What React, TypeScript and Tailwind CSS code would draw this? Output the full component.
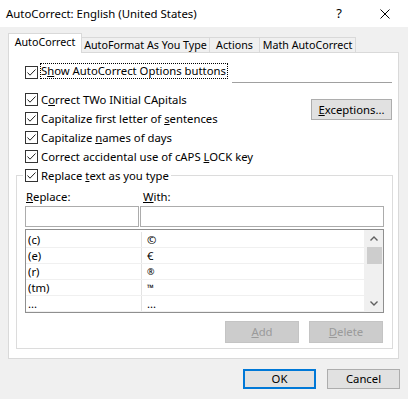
import React from 'react';

function Check({ className = '' }: { className?: string }) {
  return (
    <span className={`inline-flex w-[13px] h-[13px] shrink-0 border border-[#333333] bg-white ${className}`}>
      <svg width="11" height="11" viewBox="0 0 11 11">
        <polyline points="1.5,5.5 4,8.2 9.5,2.5" fill="none" stroke="#222" strokeWidth="1" />
      </svg>
    </span>
  );
}

function Chevron({ up }: { up?: boolean }) {
  return (
    <svg width="8" height="5" viewBox="0 0 8 5">
      <polyline
        points={up ? '0.5,4.5 4,1 7.5,4.5' : '0.5,0.5 4,4 7.5,0.5'}
        fill="none"
        stroke="#606060"
        strokeWidth="1.4"
      />
    </svg>
  );
}

const rows = [
  ['(c)', '©'],
  ['(e)', '€'],
  ['(r)', '®'],
  ['(tm)', '™'],
  ['...', '...'],
];

export default function App() {
  return (
    <div className="w-[408px] h-[399px] bg-[#f0f0f0] flex flex-col text-[11.3px] leading-none text-black font-['Noto_Sans',sans-serif] overflow-hidden whitespace-nowrap">
      {/* Title bar */}
      <div className="h-[27px] bg-white flex items-center pl-[6px] shrink-0 text-[11.4px]">
        <span className="flex-1">AutoCorrect: English (United States)</span>
        <span className="mr-[38px] text-[13px]">?</span>
        <svg width="10" height="10" viewBox="0 0 10 10" className="mr-[18px]">
          <path d="M0.5 0.5 L9.5 9.5 M9.5 0.5 L0.5 9.5" stroke="#000" strokeWidth="1" />
        </svg>
      </div>

      {/* Tabs */}
      <div className="ml-[8px] mt-[6px] w-[391px] h-[20px] flex items-end shrink-0 text-[10.7px]">
        <div className="w-[74px] h-[20px] bg-white border-l border-t border-r border-[#d9d9d9] flex items-center justify-center pb-[2px]">
          AutoCorrect
        </div>
        <div className="w-[128px] h-[16px] border-t border-r border-b border-[#d9d9d9] flex items-center justify-center">
          AutoFormat As You Type
        </div>
        <div className="w-[50px] h-[16px] border-t border-r border-b border-[#d9d9d9] flex items-center justify-center">
          Actions
        </div>
        <div className="w-[96px] h-[16px] border-t border-r border-b border-[#d9d9d9] flex items-center justify-center">
          Math AutoCorrect
        </div>
        <div className="flex-1 h-px bg-[#d9d9d9]" />
      </div>

      {/* Tab page */}
      <div className="ml-[8px] w-[391px] h-[306px] bg-white border-l border-r border-b border-[#d9d9d9] shrink-0 flex flex-col">
        <div className="mt-[10px] pl-[16px] h-[16px] flex items-end">
          <Check />
          <span className="ml-[2px] h-[16px] flex items-center border border-dotted border-black pr-[1px]">
            S<u>h</u>ow AutoCorrect Options buttons
          </span>
        </div>
        <div className="mt-[3px] ml-[223px] w-[160px] h-px bg-[#a0a0a0]" />

        <div className="mt-[7px] flex">
          <div className="pl-[16px] flex flex-col">
            {[
              <>C<u>o</u>rrect TWo INitial CApitals</>,
              <>Capitalize first letter of <u>s</u>entences</>,
              <>Capitalize <u>n</u>ames of days</>,
              <>Correct accidental use of cAPS <u>L</u>OCK key</>,
            ].map((label, i) => (
              <div key={i} className="h-[19px] flex items-center">
                <Check />
                <span className="ml-[3px]">{label}</span>
              </div>
            ))}
          </div>
          <button className="ml-auto mr-[6px] mt-[9px] w-[81px] h-[21px] bg-[#e1e1e1] border border-[#adadad]">
            <u>E</u>xceptions...
          </button>
        </div>

        <fieldset className="ml-[7px] w-[377px] border border-[#dcdcdc] pb-[5px]">
          <legend className="ml-[6px] px-[2px]">
            <div className="h-[19px] flex items-center">
              <Check />
              <span className="ml-[3px]">Replace <u>t</u>ext as you type</span>
            </div>
          </legend>
          <div className="mt-[4px] pl-[8px] h-[16px] flex items-center">
            <span className="w-[115px] pl-[1px]"><u>R</u>eplace:</span>
            <span className="pl-[3px]"><u>W</u>ith:</span>
          </div>
          <div className="mt-[1px] pl-[8px] flex">
            <div className="w-[114px] h-[21px] border border-[#acacac] bg-white" />
            <div className="ml-[1px] w-[244px] h-[21px] border border-[#acacac] bg-white" />
          </div>
          <div className="mt-[2px] ml-[8px] w-[359px] h-[84px] border border-[#8f8f8f] flex">
            <div className="flex-1 pt-[2px] flex flex-col">
              {rows.map(([a, b], i) => (
                <div key={i} className="h-[16px] flex border-b border-[#f0f0f0]">
                  <span className="w-[116px] pl-[2px] border-r border-[#e3e3e3] flex items-center">{a}</span>
                  <span className="pl-[5px] flex items-center">
                    <span className={a === '(r)' || a === '(tm)' ? 'text-[9px]' : ''}>{b}</span>
                  </span>
                </div>
              ))}
            </div>
            <div className="w-[19px] bg-[#f0f0f0] flex flex-col items-center">
              <div className="h-[17px] flex items-center justify-center">
                <Chevron up />
              </div>
              <div className="ml-[1px] w-[15px] h-[17px] bg-[#cdcdcd]" />
              <div className="flex-1" />
              <div className="h-[17px] flex items-center justify-center">
                <Chevron />
              </div>
            </div>
          </div>
          <div className="mt-[8px] pr-[9px] flex justify-end gap-[10px]">
            <button className="w-[74px] h-[22px] bg-[#cccccc] border border-[#c4c4c4] text-[#9a9a9a]">
              <u>A</u>dd
            </button>
            <button className="w-[74px] h-[22px] bg-[#cccccc] border border-[#c4c4c4] text-[#9a9a9a]">
              <u>D</u>elete
            </button>
          </div>
        </fieldset>
      </div>

      {/* Dialog buttons */}
      <div className="mt-[10px] pr-[8px] flex justify-end gap-[11px]">
        <button className="w-[73px] h-[20px] bg-[#e1e1e1] border-2 border-[#0078d7]">OK</button>
        <button className="w-[73px] h-[20px] bg-[#e1e1e1] border border-[#adadad]">Cancel</button>
      </div>
    </div>
  );
}
